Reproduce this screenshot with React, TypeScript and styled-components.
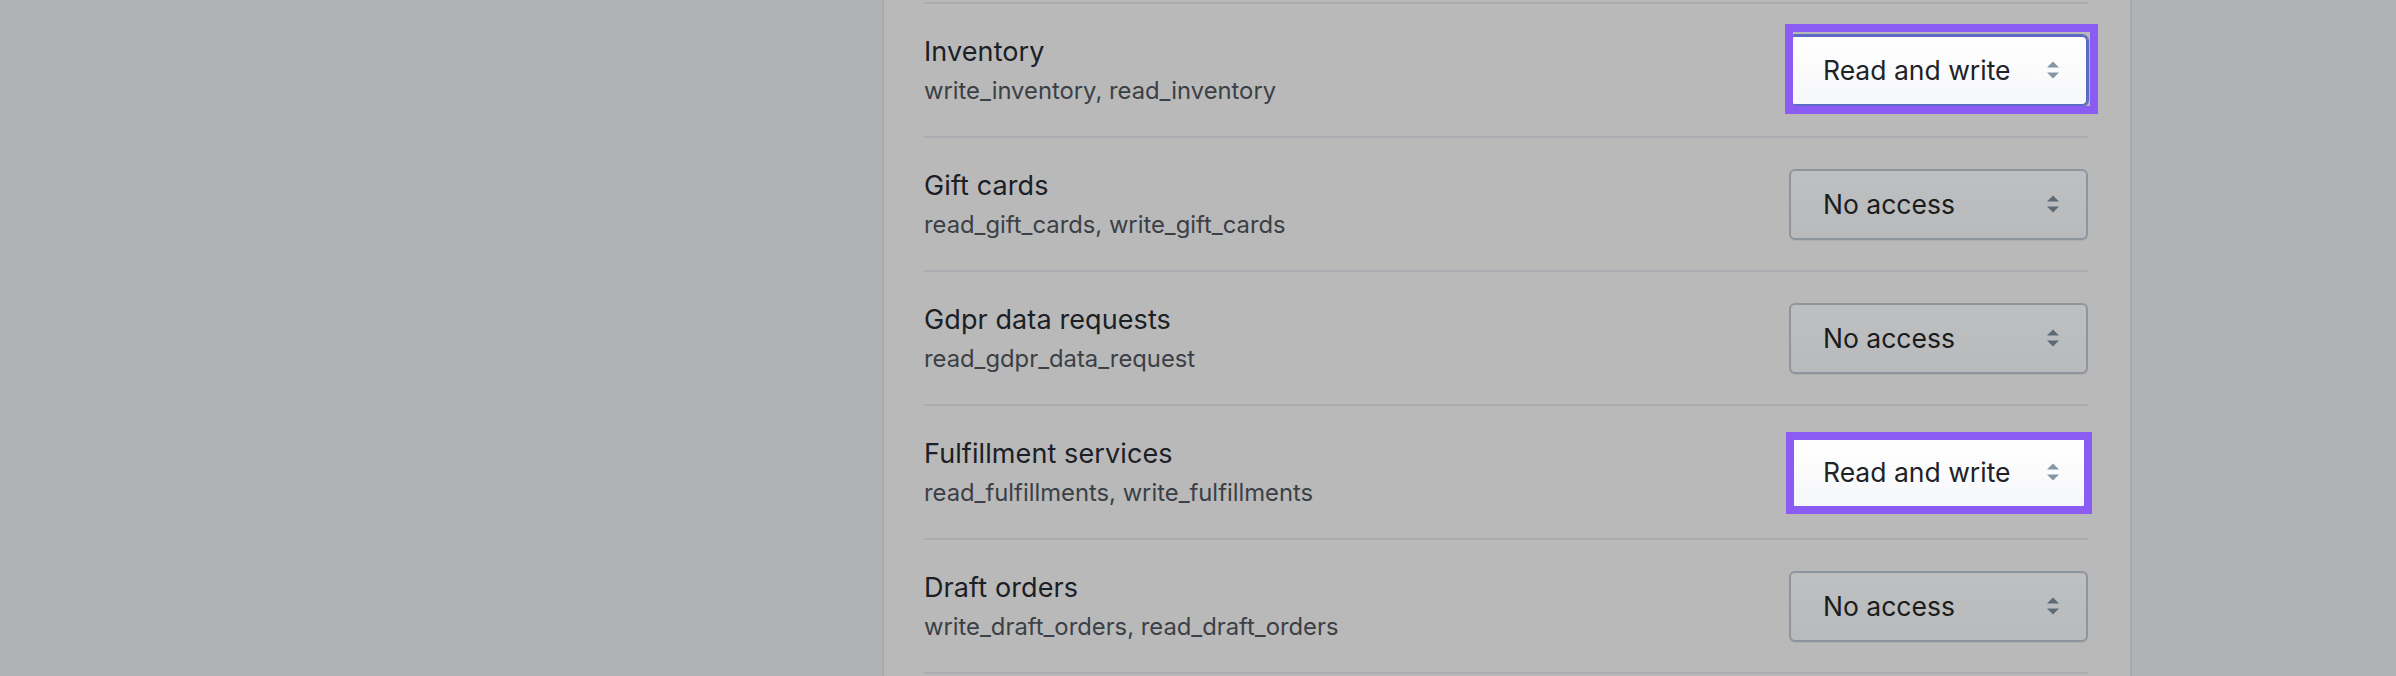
import React from "react";
import styled, { createGlobalStyle } from "styled-components";

const GlobalStyle = createGlobalStyle`
  html, body {
    margin: 0;
    padding: 0;
    background: #b1b2b4;
    font-family: "Inter", "Noto Sans", "Liberation Sans", sans-serif;
    -webkit-font-smoothing: antialiased;
  }
  #root { height: 676px; overflow: hidden; }
`;

const Page = styled.div`
  display: grid;
  grid-template-columns: 882px 1250px 1fr;
  height: 676px;
`;

const Sidebar = styled.div``;

const Card = styled.section`
  box-sizing: border-box;
  background: #b9b9b9;
  border-left: 2px solid #a8a9ab;
  border-right: 2px solid #a8a9ab;
  padding: 2px 42px 0 40px;
`;

const Row = styled.div`
  box-sizing: border-box;
  height: 134px;
  border-top: 2px solid #a9acb0;
  display: flex;
  align-items: center;
  justify-content: space-between;
`;

const Info = styled.div`
  display: flex;
  flex-direction: column;
  padding-top: 2px;
`;

const Title = styled.div`
  font-size: 27px;
  line-height: 39px;
  color: #1b2026;
  letter-spacing: 0.1px;
`;

const Scopes = styled.div`
  font-size: 23.8px;
  line-height: 39px;
  color: #3b4046;
`;

const SelectWrap = styled.div`
  position: relative;
  width: 299px;
  height: 71px;
`;

const SelectBox = styled.div<{ $active: boolean }>`
  box-sizing: border-box;
  width: 100%;
  height: 100%;
  display: flex;
  align-items: center;
  justify-content: space-between;
  padding: 0 27px 0 32px;
  border-radius: 6px;
  font-size: 26.5px;
  color: ${(p) => (p.$active ? "#1f2226" : "#191b1d")};
  border: 2px solid ${(p) => (p.$active ? "#5c6ac4" : "#8e959c")};
  background: ${(p) =>
    p.$active
      ? "linear-gradient(#ffffff, #f6f7f9)"
      : "linear-gradient(#bebfc0, #b9babb)"};
  box-shadow: ${(p) =>
    p.$active ? "0 0 0 1px #5c6ac4" : "0 1px 0 rgba(0,0,0,0.06)"};
`;

const Highlight = styled.div<{ $inset: string }>`
  position: absolute;
  inset: ${(p) => p.$inset};
  border: 8px solid #8b5cf3;
  pointer-events: none;
`;

const Arrows = ({ color }: { color: string }) => (
  <svg width="12" height="18" viewBox="0 0 12 18" fill={color}>
    <polygon points="0,6.5 6,0.5 12,6.5" />
    <polygon points="0,11.5 12,11.5 6,17.5" />
  </svg>
);

type Perm = {
  title: string;
  scopes: string;
  value: string;
  active?: boolean;
  inset?: string;
};

const perms: Perm[] = [
  {
    title: "Inventory",
    scopes: "write_inventory, read_inventory",
    value: "Read and write",
    active: true,
    inset: "-11px -10px -8px -4px",
  },
  {
    title: "Gift cards",
    scopes: "read_gift_cards, write_gift_cards",
    value: "No access",
  },
  {
    title: "Gdpr data requests",
    scopes: "read_gdpr_data_request",
    value: "No access",
  },
  {
    title: "Fulfillment services",
    scopes: "read_fulfillments, write_fulfillments",
    value: "Read and write",
    active: true,
    inset: "-5px -4px -6px -3px",
  },
  {
    title: "Draft orders",
    scopes: "write_draft_orders, read_draft_orders",
    value: "No access",
  },
];

export default function App() {
  return (
    <>
      <GlobalStyle />
      <Page>
        <Sidebar />
        <Card>
          {perms.map((p) => (
            <Row key={p.title}>
              <Info>
                <Title>{p.title}</Title>
                <Scopes>{p.scopes}</Scopes>
              </Info>
              <SelectWrap>
                <SelectBox $active={!!p.active}>
                  <span>{p.value}</span>
                  <Arrows color={p.active ? "#8696a7" : "#5d6a76"} />
                </SelectBox>
                {p.inset && <Highlight $inset={p.inset} />}
              </SelectWrap>
            </Row>
          ))}
          <Row />
        </Card>
        <div />
      </Page>
    </>
  );
}
